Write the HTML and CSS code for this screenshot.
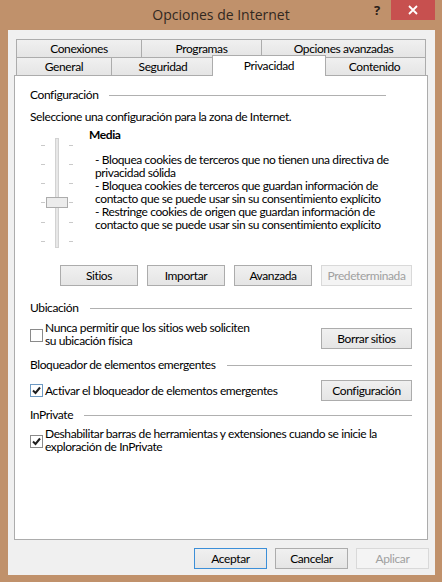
FILE: index.html
```html
<!DOCTYPE html>
<html lang="es">
<head>
<meta charset="utf-8">
<title>Opciones de Internet</title>
<link rel="stylesheet" href="styles.css">
</head>
<body>
<div class="window">
  <div class="titlebar">
    <div class="title">Opciones de Internet</div>
    <div class="caption-help">?</div>
    <div class="caption-close">
      <svg width="10" height="10" viewBox="0 0 10 10"><path d="M1 1 L9 9 M9 1 L1 9" stroke="#fff" stroke-width="1.8" fill="none"/></svg>
    </div>
  </div>

  <div class="client">
    <div class="tabs">
      <div class="tab-row">
        <div class="tab tab-conexiones">Conexiones</div>
        <div class="tab tab-programas">Programas</div>
        <div class="tab tab-fill">Opciones avanzadas</div>
      </div>
      <div class="tab-row">
        <div class="tab tab-general">General</div>
        <div class="tab tab-seguridad">Seguridad</div>
        <div class="tab tab-active">Privacidad</div>
        <div class="tab tab-fill">Contenido</div>
      </div>
    </div>

    <div class="panel">
      <div class="group-head head-config">Configuración</div>
      <div class="intro">Seleccione una configuración para la zona de Internet.</div>

      <div class="level">
        <svg class="slider" width="40" height="125" viewBox="0 0 40 125">
          <g fill="#c9c9c9">
            <rect x="5" y="18" width="4" height="1"/><rect x="33" y="18" width="4" height="1"/>
            <rect x="5" y="37" width="4" height="1"/><rect x="33" y="37" width="4" height="1"/>
            <rect x="5" y="56" width="4" height="1"/><rect x="33" y="56" width="4" height="1"/>
            <rect x="5" y="75" width="4" height="1"/><rect x="33" y="75" width="4" height="1"/>
            <rect x="5" y="95" width="4" height="1"/><rect x="33" y="95" width="4" height="1"/>
            <rect x="5" y="114" width="4" height="1"/><rect x="33" y="114" width="4" height="1"/>
          </g>
          <rect x="19.5" y="11.5" width="3" height="109" fill="#e7e7e7" stroke="#d2d2d2"/>
          <rect x="10.5" y="70.5" width="21" height="10" fill="#ececec" stroke="#acacac"/>
        </svg>
        <div class="level-text">
          <div class="level-name">Media</div>
          <div class="level-desc">- Bloquea cookies de terceros que no tienen una directiva de<br>privacidad sólida<br>- Bloquea cookies de terceros que guardan información de<br>contacto que se puede usar sin su consentimiento explícito<br>- Restringe cookies de origen que guardan información de<br>contacto que se puede usar sin su consentimiento explícito</div>
        </div>
      </div>

      <div class="actions">
        <button class="btn w78">Sitios</button>
        <button class="btn w78">Importar</button>
        <button class="btn w78">Avanzada</button>
        <button class="btn w91 disabled">Predeterminada</button>
      </div>

      <div class="group-head head-location">Ubicación</div>
      <div class="option-row row-location">
        <div class="check-label">
          <span class="checkbox"></span>
          <span>Nunca permitir que los sitios web soliciten<br>su ubicación física</span>
        </div>
        <button class="btn w91 btn-clear">Borrar sitios</button>
      </div>

      <div class="group-head head-popup">Bloqueador de elementos emergentes</div>
      <div class="option-row row-popup">
        <div class="check-label">
          <span class="checkbox checked focus">
            <svg width="11" height="11" viewBox="0 0 11 11"><path d="M2 5.5 L4.5 8 L9 2.5" stroke="#1e1e1e" stroke-width="2" fill="none"/></svg>
          </span>
          <span>Activar el bloqueador de elementos emergentes</span>
        </div>
        <button class="btn w91">Configuración</button>
      </div>

      <div class="group-head head-private">InPrivate</div>
      <div class="option-row row-private">
        <div class="check-label">
          <span class="checkbox checked">
            <svg width="11" height="11" viewBox="0 0 11 11"><path d="M2 5.5 L4.5 8 L9 2.5" stroke="#1e1e1e" stroke-width="2" fill="none"/></svg>
          </span>
          <span>Deshabilitar barras de herramientas y extensiones cuando se inicie la<br>exploración de InPrivate</span>
        </div>
      </div>
    </div>

    <div class="dialog-buttons">
      <button class="btn w73 default">Aceptar</button>
      <button class="btn w73">Cancelar</button>
      <button class="btn w73 disabled">Aplicar</button>
    </div>
  </div>
</div>
</body>
</html>
```
FILE: styles.css
```css
* {
  box-sizing: border-box;
}

html,
body {
  margin: 0;
  padding: 0;
}

body {
  width: 442px;
  height: 582px;
  overflow: hidden;
  background: #c0916b;
  font-family: Lato, "Open Sans", "Liberation Sans", sans-serif;
  font-size: 12px;
  letter-spacing: -0.4px;
  color: #000;
}

.window {
  display: flex;
  flex-direction: column;
  height: 582px;
}

/* Caption */
.titlebar {
  position: relative;
  height: 30px;
  flex: none;
}

.title {
  text-align: center;
  font-family: "Open Sans", "Noto Sans", sans-serif;
  font-size: 14px;
  letter-spacing: 0;
  line-height: 30px;
  color: #32281f;
}

.caption-help {
  position: absolute;
  left: 374px;
  top: 2px;
  font-family: "Open Sans", sans-serif;
  font-size: 13px;
  font-weight: bold;
  color: #2a2018;
  line-height: 16px;
}

.caption-close {
  position: absolute;
  left: 391px;
  top: 0;
  width: 44px;
  height: 20px;
  background: #c7504f;
  display: flex;
  align-items: center;
  justify-content: center;
}

.caption-close svg {
  display: block;
}

/* Client area */
.client {
  margin: 0 7px 0 8px;
  height: 545px;
  background: #f0f0f0;
  padding: 9px 7px 0 6px;
  display: flex;
  flex-direction: column;
}

/* Tabs */
.tabs {
  margin: 0 2px;
}

.tab-row {
  display: flex;
  height: 18px;
}

.tab {
  border: 1px solid #acacac;
  border-bottom: none;
  background: linear-gradient(#f0f0f0, #e5e5e5);
  text-align: center;
  line-height: 18px;
  white-space: nowrap;
  margin-left: -1px;
}

.tab:first-child {
  margin-left: 0;
}

.tab-conexiones { width: 126px; }
.tab-programas { width: 121px; }
.tab-general { width: 96px; }
.tab-seguridad { width: 104px; }
.tab-fill { flex: 1; }

.tab-active {
  position: relative;
  z-index: 1;
  width: 114px;
  height: 21px;
  margin: -2px -2px 0 -3px;
  background: #fff;
  line-height: 19px;
}

/* Panel */
.panel {
  height: 465px;
  border: 1px solid #acacac;
  background: #fff;
  padding: 0 15px;
}

.group-head {
  display: flex;
  align-items: center;
  height: 16px;
  line-height: 16px;
  white-space: nowrap;
}

.group-head::after {
  content: "";
  flex: 1;
  height: 0;
  border-top: 1px solid #b0b0b0;
  margin-left: 11px;
}

.head-config {
  margin-top: 11px;
  margin-right: 26px;
}

.intro {
  margin-top: 6px;
  line-height: 16px;
}

.level {
  display: flex;
  margin-top: 2px;
}

.slider {
  display: block;
  margin-left: 6px;
  flex: none;
}

.level-text {
  margin-left: 13px;
}

.level-name {
  font-weight: bold;
  line-height: 16px;
}

.level-desc {
  margin-top: 10px;
  padding-left: 6px;
  line-height: 13px;
  white-space: nowrap;
}

.actions {
  display: flex;
  justify-content: flex-end;
  gap: 9px;
  margin-top: 13px;
}

/* Buttons */
.btn {
  height: 21px;
  padding: 0;
  border: 1px solid #acacac;
  background: linear-gradient(#f0f0f0, #e5e5e5);
  font: inherit;
  letter-spacing: inherit;
  color: #000;
  text-align: center;
  line-height: 19px;
  white-space: nowrap;
}

.btn.default {
  border-color: #3c8fd8;
}

.btn.disabled {
  border-color: #d9d9d9;
  background: #f4f4f4;
  color: #a0a0a0;
}

.w73 { width: 73px; }
.w78 { width: 78px; }
.w91 { width: 91px; }

.head-location { margin-top: 14px; }
.head-popup { margin-top: 8px; }
.head-private { margin-top: 6px; }

.option-row {
  display: flex;
  justify-content: space-between;
  align-items: flex-start;
}

.row-location { margin-top: 5px; }
.row-popup { margin-top: 7px; align-items: center; }
.row-private { margin-top: 4px; }

.btn-clear { margin-top: 7px; }

.check-label {
  display: flex;
  align-items: center;
  gap: 2px;
  line-height: 13px;
  white-space: nowrap;
}

.row-popup .check-label {
  line-height: 16px;
}

.row-location .checkbox,
.row-private .checkbox {
  margin-top: 3px;
}

.checkbox {
  flex: none;
  width: 13px;
  height: 13px;
  border: 1px solid #8a8a8a;
  background: #fff;
  display: flex;
  align-items: center;
  justify-content: center;
}

.checkbox svg {
  display: block;
}

.checkbox.focus {
  border-color: #6d9ac4;
}

/* Dialog command buttons */
.dialog-buttons {
  display: flex;
  justify-content: flex-end;
  gap: 8px;
  margin-top: 8px;
  margin-right: -1px;
}
```
